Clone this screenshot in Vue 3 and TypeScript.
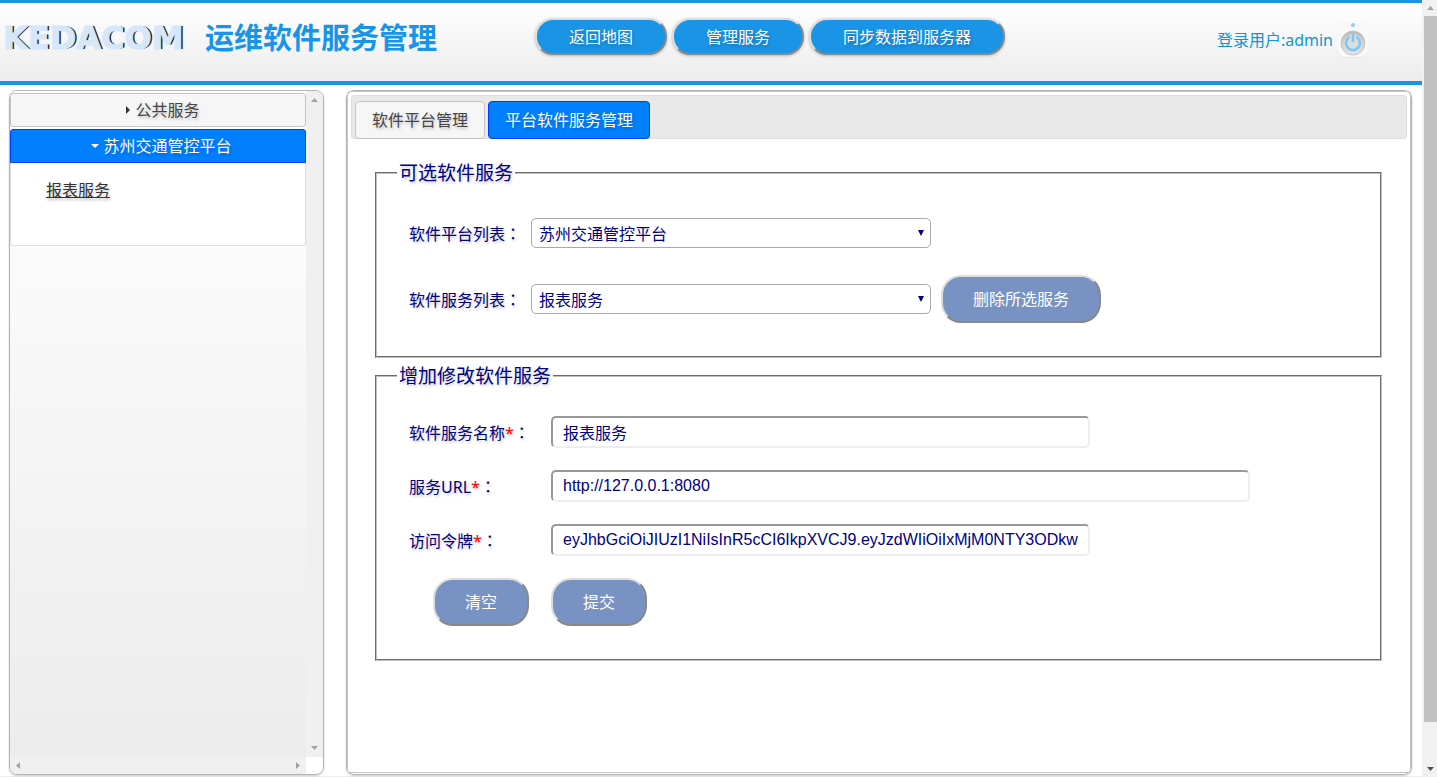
<script setup lang="ts">
import { ref } from 'vue'

interface Field {
  id: string
  label: string
  wide: boolean
  value: string
}

const navItems: string[] = ['返回地图', '管理服务', '同步数据到服务器']
const platform = ref('苏州交通管控平台')
const service = ref('报表服务')
const fields = ref<Field[]>([
  { id: 'service-name', label: '软件服务名称', wide: false, value: '报表服务' },
  { id: 'service-url', label: '服务URL', wide: true, value: 'http://127.0.0.1:8080' },
  {
    id: 'service-token',
    label: '访问令牌',
    wide: false,
    value: 'eyJhbGciOiJIUzI1NiIsInR5cCI6IkpXVCJ9.eyJzdWIiOiIxMjM0NTY3ODkw',
  },
])

function clearFields(): void {
  fields.value.forEach((f) => (f.value = ''))
}
</script>

<template>
  <div class="window">
    <div class="page">
      <header class="top">
        <div class="brand">
          <span class="logo">KEDACOM</span>
          <h1 class="title">运维软件服务管理</h1>
        </div>
        <nav class="nav">
          <button v-for="item in navItems" :key="item" type="button" class="nav-btn">{{ item }}</button>
        </nav>
        <div class="user">
          <span>登录用户:admin</span>
          <button type="button" class="power" aria-label="退出">
            <svg width="32" height="38" viewBox="0 0 32 38">
              <defs>
                <linearGradient id="knob" x1="0" y1="0" x2="0" y2="1">
                  <stop offset="0" stop-color="#b8b8b8" />
                  <stop offset="1" stop-color="#e8e8e8" />
                </linearGradient>
              </defs>
              <rect x="1" y="2" width="30" height="35" rx="7" fill="#e6e6e6" />
              <rect x="1" y="1" width="30" height="35" rx="7" fill="#f8f8f8" />
              <circle cx="16" cy="4" r="2" fill="#8fcdea" />
              <circle cx="16" cy="22" r="12" fill="url(#knob)" stroke="#c4c4c4" />
              <circle cx="16" cy="22" r="9" fill="#dadfe2" />
              <path d="M12 16.200a7 7 0 1 0 8 0" fill="none" stroke="#7cc8f2" stroke-width="2.600" stroke-linecap="round" />
              <path d="M16 14v6" stroke="#7cc8f2" stroke-width="2.600" stroke-linecap="round" />
            </svg>
          </button>
        </div>
      </header>

      <div class="body">
        <aside class="side">
          <div class="side-view">
            <button type="button" class="acc-head" aria-expanded="false">
              <svg class="acc-icon" viewBox="0 0 16 16"><path d="M7 4l4 4-4 4z" fill="#333" /></svg>公共服务
            </button>
            <button type="button" class="acc-head active" aria-expanded="true">
              <svg class="acc-icon" viewBox="0 0 16 16"><path d="M4 6h8l-4 4z" fill="#fff" /></svg>苏州交通管控平台
            </button>
            <div class="acc-body">
              <a href="#" class="acc-link">报表服务</a>
            </div>
          </div>
          <div class="bar-v" aria-hidden="true">
            <svg viewBox="0 0 17 17"><path d="M5 11h7l-3.500-4z" fill="#a3a3a3" /></svg>
            <svg viewBox="0 0 17 17"><path d="M5 6h7l-3.500 4z" fill="#a3a3a3" /></svg>
          </div>
          <div class="bar-h" aria-hidden="true">
            <svg viewBox="0 0 17 17"><path d="M10 5v7l-4-3.500z" fill="#a3a3a3" /></svg>
            <svg viewBox="0 0 17 17"><path d="M7 5v7l4-3.500z" fill="#a3a3a3" /></svg>
          </div>
        </aside>

        <main class="content">
          <div class="tabs">
            <div class="tab-list" role="tablist">
              <button type="button" role="tab" class="tab" aria-selected="false">软件平台管理</button>
              <button type="button" role="tab" class="tab active" aria-selected="true">平台软件服务管理</button>
            </div>
            <form class="forms" @submit.prevent>
              <fieldset class="group pick">
                <legend>可选软件服务</legend>
                <div class="row">
                  <label for="platform">软件平台列表<span class="colon">：</span></label>
                  <div class="select">
                    <select id="platform" v-model="platform">
                      <option>苏州交通管控平台</option>
                    </select>
                    <svg viewBox="0 0 6 6"><path d="M0 0h6L3 6z" fill="#000080" /></svg>
                  </div>
                </div>
                <div class="row">
                  <label for="service">软件服务列表<span class="colon">：</span></label>
                  <div class="select">
                    <select id="service" v-model="service">
                      <option>报表服务</option>
                    </select>
                    <svg viewBox="0 0 6 6"><path d="M0 0h6L3 6z" fill="#000080" /></svg>
                  </div>
                  <button type="button" class="action">删除所选服务</button>
                </div>
              </fieldset>

              <fieldset class="group edit">
                <legend>增加修改软件服务</legend>
                <div v-for="f in fields" :key="f.id" class="row">
                  <label :for="f.id">{{ f.label }}<span class="must">*</span><span class="colon">：</span></label>
                  <input :id="f.id" v-model="f.value" type="text" :class="{ wide: f.wide }" />
                </div>
                <div class="actions">
                  <button type="button" class="action" @click="clearFields">清空</button>
                  <button type="submit" class="action">提交</button>
                </div>
              </fieldset>
            </form>
          </div>
        </main>
      </div>
    </div>

    <div class="page-bar" aria-hidden="true">
      <svg viewBox="0 0 15 16"><path d="M5 10h7l-3.500-4z" fill="#a3a3a3" /></svg>
      <div class="track"><div class="thumb"></div></div>
      <svg viewBox="0 0 15 16"><path d="M5 6h7l-3.500 4z" fill="#505050" /></svg>
    </div>
  </div>
</template>

<style>
body {
  margin: 0;
  background: #fff;
}
</style>

<style scoped>
.window,
.window * {
  box-sizing: border-box;
}

.window {
  --soft-shadow: 1px 2px 3px rgba(0, 0, 0, 0.22);
  display: flex;
  min-height: 100vh;
  font: 16px/24px 'Noto Sans', 'Noto Sans CJK SC', sans-serif;
  color: #000080;
}

button,
select {
  font: inherit;
  cursor: pointer;
}

.page {
  flex: 1;
  min-width: 0;
  display: flex;
  flex-direction: column;
  border-bottom: 1px solid #eee;
}

.top {
  display: flex;
  height: 85px;
  border-top: 3px solid #1a94e6;
  border-bottom: 4px solid #1a94e6;
  background: linear-gradient(#fff, #ececec);
}

.brand {
  display: flex;
  align-items: center;
  flex: 0 0 535px;
  height: 70px;
  padding-left: 3px;
}

.logo {
  flex: 0 0 202px;
  font: bold 32px/40px 'DejaVu Sans', sans-serif;
  color: #d5e7f9;
  -webkit-text-stroke: 1px #d5e7f9;
  text-shadow: 2px 0 0 #222;
}

.title {
  margin: 0;
  font-size: 29px;
  line-height: 40px;
  font-weight: bold;
  color: #1a94e6;
}

.nav {
  display: flex;
  gap: 5px;
  padding-top: 15px;
}

.nav-btn {
  height: 37px;
  padding: 0 32px;
  border: 2px solid;
  border-color: #ddd #888 #888 #ddd;
  border-radius: 18px;
  background: #1a94e6;
  color: #fff;
  white-space: nowrap;
  text-shadow: var(--soft-shadow);
  box-shadow: 0 1px 3px rgba(0, 0, 0, 0.25);
}

.user {
  display: flex;
  align-items: center;
  gap: 4px;
  height: 73px;
  margin-left: auto;
  padding-right: 53px;
  color: #0f96cf;
  white-space: nowrap;
}

.power {
  height: 38px;
  padding: 0;
  border: 0;
  background: none;
}

.power svg {
  display: block;
}

.body {
  flex: 1;
  display: flex;
  gap: 22px;
  padding: 5px 10px 1px 9px;
}

.side {
  flex: 0 0 315px;
  display: grid;
  grid-template-columns: 1fr 17px;
  grid-template-rows: 1fr 17px;
  overflow: hidden;
  border: 1px solid #b4b4b4;
  border-radius: 8px;
  box-shadow: 0 1px 2px rgba(0, 0, 0, 0.2);
}

.side-view {
  padding-top: 2px;
  background: linear-gradient(#fff, #ececec);
}

.acc-head {
  display: flex;
  align-items: center;
  justify-content: center;
  width: 100%;
  height: 34px;
  margin-bottom: 2px;
  padding: 0 8px 0 11px;
  border: 1px solid #c5c5c5;
  border-radius: 3px;
  background: #f6f6f6;
  color: #454545;
  text-shadow: var(--soft-shadow);
}

.acc-head.active {
  margin-bottom: 0;
  border-color: #003eff;
  border-radius: 3px 3px 0 0;
  background: #007fff;
  color: #fff;
}

.acc-icon {
  width: 16px;
  height: 16px;
}

.acc-body {
  height: 83px;
  padding: 14px 35px;
  border: 1px solid #ddd;
  border-top: 0;
  border-radius: 0 0 3px 3px;
  background: #fff;
}

.acc-link {
  font-family: 'KaiTi', 'Noto Sans CJK SC', serif;
  color: #333;
  text-decoration: underline;
  text-shadow: var(--soft-shadow);
}

.bar-v,
.bar-h {
  display: flex;
  justify-content: space-between;
  background: #f0f0f0;
}

.bar-v {
  flex-direction: column;
}

.bar-v svg,
.bar-h svg {
  width: 17px;
  height: 17px;
}

.content {
  flex: 1;
  min-width: 0;
  display: flex;
  padding-bottom: 1px;
  border: 1px solid #b4b4b4;
  border-radius: 8px;
  box-shadow: 0 1px 2px rgba(0, 0, 0, 0.2);
}

.tabs {
  flex: 1;
  min-width: 0;
  padding: 3px;
  border: 1px solid #c5c5c5;
  border-radius: 3px;
}

.tab-list {
  display: flex;
  gap: 3px;
  height: 44px;
  padding: 5px 3px 0;
  border: 1px solid #ddd;
  border-radius: 3px;
  background: #e9e9e9;
}

.tab {
  height: 38px;
  padding: 0 16px;
  border: 1px solid #c5c5c5;
  border-radius: 4px;
  background: #f6f6f6;
  color: #454545;
  white-space: nowrap;
  text-shadow: var(--soft-shadow);
}

.tab.active {
  border-color: #003eff;
  background: #007fff;
  color: #fff;
}

.forms {
  display: flex;
  flex-direction: column;
  gap: 5px;
  padding: 21px 25px 0 24px;
}

.group {
  min-width: 0;
  margin: 0;
  padding: 0 32px 33px;
  border: 2px groove #c0c0c0;
}

legend {
  margin-left: -12px;
  padding: 0 2px;
  font-size: 19px;
  line-height: 26px;
  text-shadow: var(--soft-shadow);
}

.row {
  display: flex;
  align-items: center;
}

label {
  white-space: nowrap;
  text-shadow: var(--soft-shadow);
}

.colon {
  font-family: 'Noto Sans CJK TC', sans-serif;
}

.must {
  color: #f00;
}

.pick .row {
  height: 48px;
  margin-top: 18px;
}

.pick legend + .row {
  margin-top: 23px;
}

.pick label {
  flex: 0 0 122px;
}

.select {
  display: grid;
  align-items: center;
  flex: 0 1 400px;
  margin-right: 10px;
}

.select select,
.select svg {
  grid-area: 1 / 1;
}

.select select {
  appearance: none;
  width: 100%;
  height: 30px;
  padding: 2px 24px 0 7px;
  border: 1px solid #a9a9a9;
  border-radius: 5px;
  background: #fff;
  color: #000080;
}

.select svg {
  width: 6px;
  height: 6px;
  margin-right: 7px;
  justify-self: end;
  pointer-events: none;
}

.action {
  height: 48px;
  padding: 0 30px;
  border: 2px solid;
  border-color: #ddd #888 #888 #ddd;
  border-radius: 20px;
  background: #7893c3;
  color: #fff;
  white-space: nowrap;
}

.edit .row {
  height: 32px;
  margin-top: 22px;
}

.edit legend + .row {
  margin-top: 27px;
}

.edit label {
  flex: 0 0 142px;
}

input {
  flex: 0 1 539px;
  min-width: 0;
  height: 32px;
  padding: 0 10px;
  border: 2px solid;
  border-color: #999 #eee #eee #999;
  border-radius: 5px;
  background: #fff;
  font: 16px/24px 'Liberation Sans', 'Noto Sans CJK SC', sans-serif;
  color: #000080;
}

input.wide {
  flex-basis: 699px;
}

.actions {
  display: flex;
  gap: 22px;
  margin: 22px 0 0 24px;
}

.page-bar {
  flex: 0 0 15px;
  display: flex;
  flex-direction: column;
  background: #f1f1f1;
}

.page-bar svg {
  width: 15px;
  height: 16px;
}

.track {
  flex: 1;
  display: flex;
  padding: 0 0 39px 2px;
}

.thumb {
  flex: 1;
  background: #c1c1c1;
}
</style>
